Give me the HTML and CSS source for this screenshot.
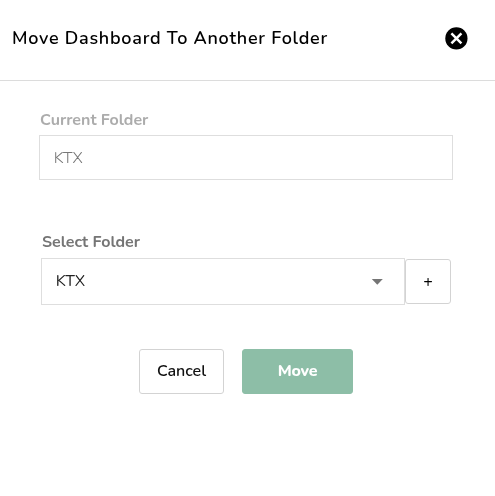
FILE: index.html
```html
<!DOCTYPE html>
<html lang="en">
<head>
<meta charset="utf-8">
<title>Move Dashboard</title>
<link rel="stylesheet" href="styles.css">
</head>
<body>
<main class="dialog">
  <header class="header">
    <h1 class="title">Move Dashboard To Another Folder</h1>
    <button class="close" aria-label="Close">
      <svg width="24" height="24" viewBox="0 0 24 24"><circle cx="12.4" cy="12.4" r="11.1" fill="#000"/><path d="M7.4 7.4l10 10M17.4 7.4l-10 10" stroke="#fff" stroke-width="2.5"/></svg>
    </button>
  </header>
  <section class="current">
    <div class="label label-current"><span>Current Folder</span></div>
    <div class="field"><span>KTX</span></div>
  </section>
  <section class="select">
    <div class="label label-select"><span>Select Folder</span></div>
    <div class="row">
      <div class="dropdown"><span>KTX</span><svg width="12" height="6" viewBox="0 0 12 6"><path d="M.8 0h11L6.3 5.8z" fill="#757575"/></svg></div>
      <button class="btn add"><span>+</span></button>
    </div>
  </section>
  <footer class="actions">
    <button class="btn cancel"><span>Cancel</span></button>
    <button class="btn move"><span>Move</span></button>
  </footer>
</main>
</body>
</html>
```
FILE: styles.css
```css
* { box-sizing: border-box; }
body { margin: 0; background: #fff; color: #111; font-family: Nunito, Lato, sans-serif; }
button { padding: 0; font: inherit; }
.dialog { width: 495px; height: 496px; overflow: hidden; will-change: transform; }
.header { display: flex; align-items: center; justify-content: space-between; height: 81px; padding: 0 27px 4px 12px; border-bottom: 1px solid #dcdcdc; }
.title { margin: 0; font-size: 18px; line-height: 24px; font-weight: 650; letter-spacing: 0.73px; white-space: nowrap; color: #000; }
.close { width: 24px; height: 24px; border: 0; background: none; }
.close svg { display: block; }
.current { padding: 29px 42px 0 39px; }
.label { height: 20px; line-height: 20px; font-size: 16px; font-weight: 700; white-space: nowrap; }
.label-current { margin: 0 0 5px 1px; color: #acacac; }
.field { display: flex; align-items: center; height: 45px; padding: 0 13.7px; border: 1px solid #dedede; font-size: 16px; font-weight: 300; color: #777; }
.select { padding: 52px 44px 0 41px; }
.label-select { margin: 0 0 6px 1px; color: #757575; }
.row { display: flex; align-items: center; }
.dropdown { display: flex; align-items: center; justify-content: space-between; width: 364px; height: 47px; padding: 0 21px 0 13.7px; border: 1px solid #dedede; font-size: 16px; color: #222; }
.dropdown span { margin-bottom: 2px; }
.btn { display: flex; align-items: center; justify-content: center; height: 45px; border: 1px solid #d3d3d3; border-radius: 3px; background: #fff; color: #111; font-size: 16px; font-weight: 650; }
.add { width: 46px; font-weight: 500; color: #000; }
.actions { display: flex; gap: 18px; padding: 44px 0 0 139px; }
.cancel { width: 85px; }
.actions span { margin-bottom: 2px; }
.move { width: 111px; border-color: #8dbea7; background: #8dbea7; color: #fff; font-weight: 800; letter-spacing: -0.2px; }
```
